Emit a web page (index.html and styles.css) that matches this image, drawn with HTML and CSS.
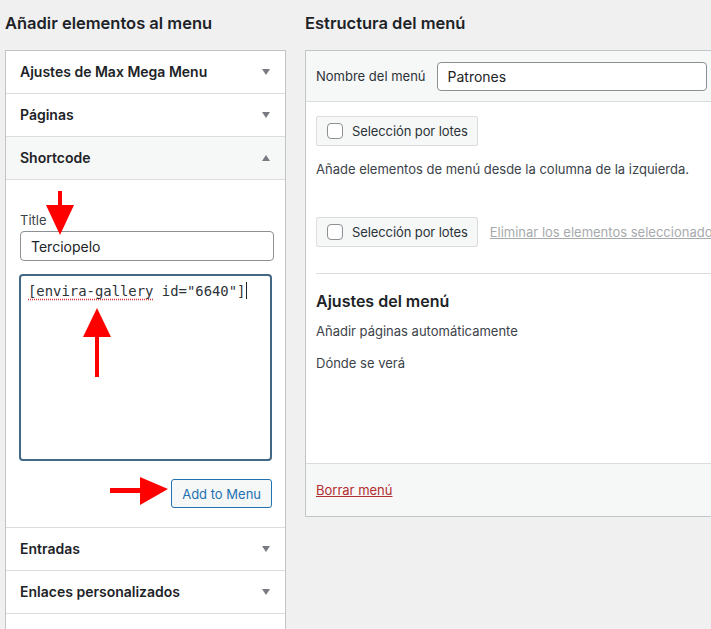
FILE: index.html
```html
<!DOCTYPE html>
<html>
<head>
    <title>Menús</title>
    <link rel="stylesheet" href="styles.css">
</head>
<body>
    <div class="menu-page">
        <div class="col-left">
            <h2>Añadir elementos al menu</h2>
            <div class="accordion">
                <div class="acc-row"><span>Ajustes de Max Mega Menu</span><i class="caret"></i></div>
                <div class="acc-row"><span>Páginas</span><i class="caret"></i></div>
                <div class="acc-row open"><span>Shortcode</span><i class="caret up"></i></div>
                <div class="acc-body">
                    <label class="field-label">Title</label>
                    <input class="text-input" type="text" value="Terciopelo">
                    <div class="code-area"><span class="typo">[envira-gallery</span> id="6640"]<span class="cursor"></span></div>
                    <div class="actions"><button class="btn-add">Add to Menu</button></div>

                    <svg class="arrow arrow-down" width="30" height="46" viewBox="0 0 30 46">
                        <rect x="13" y="0" width="4" height="20" fill="#f00"/>
                        <polygon points="1,14 29,14 15,44" fill="#f00"/>
                    </svg>
                    <svg class="arrow arrow-up" width="30" height="70" viewBox="0 0 30 70">
                        <polygon points="1,29 29,29 15,0" fill="#f00"/>
                        <rect x="13" y="25" width="4" height="44" fill="#f00"/>
                    </svg>
                    <svg class="arrow arrow-right" width="60" height="30" viewBox="0 0 60 30">
                        <rect x="0" y="12" width="34" height="5" fill="#f00"/>
                        <polygon points="30,1 30,29 58,13" fill="#f00"/>
                    </svg>
                </div>
                <div class="acc-row"><span>Entradas</span><i class="caret"></i></div>
                <div class="acc-row"><span>Enlaces personalizados</span><i class="caret"></i></div>
                <div class="acc-row"><span></span></div>
            </div>
        </div>

        <div class="col-right">
            <h2>Estructura del menú</h2>
            <div class="structure">
                <div class="structure-head">
                    <label>Nombre del menú</label>
                    <input class="text-input name-input" type="text" value="Patrones">
                </div>
                <div class="structure-body">
                    <div class="bulk"><span class="check"></span>Selección por lotes</div>
                    <p class="hint">Añade elementos de menú desde la columna de la izquierda.</p>
                    <div class="bulk-line">
                        <div class="bulk"><span class="check"></span>Selección por lotes</div>
                        <a class="remove-link">Eliminar los elementos seleccionados</a>
                    </div>
                    <div class="settings">
                        <h3>Ajustes del menú</h3>
                        <p>Añadir páginas automáticamente</p>
                        <p>Dónde se verá</p>
                    </div>
                </div>
                <div class="structure-foot">
                    <a class="delete-link">Borrar menú</a>
                </div>
            </div>
        </div>
    </div>
</body>
</html>
```

FILE: styles.css
```css
html, body { overflow: hidden; }
body { margin: 0; background: #f0f0f1; font-family: Inter, "Noto Sans", sans-serif; color: #1d2327; }
.menu-page { display: flex; gap: 19px; padding-left: 5px; }
h2 { font-size: 16.5px; font-weight: 600; line-height: 24px; margin: 11px 0 15px; }

.col-left { width: 281px; flex-shrink: 0; }
.accordion { background: #fff; border: 1px solid #c3c4c7; border-bottom: none; }
.acc-row { border-bottom: 1px solid #dcdcde; display: flex; align-items: center; justify-content: space-between; padding: 0 15px 1px 14px; box-sizing: border-box; height: 43px; font-size: 14px; font-weight: 600; }
.acc-row.open { background: #f6f7f7; }
.caret { width: 0; height: 0; border-left: 4.5px solid transparent; border-right: 4.5px solid transparent; border-top: 6px solid #787c82; }
.caret.up { border-top: none; border-bottom: 6px solid #787c82; }
.acc-body { position: relative; height: 348px; box-sizing: border-box; border-bottom: 1px solid #dcdcde; padding: 31px 13px 0 13px; }
.field-label { display: block; font-size: 13px; line-height: 18px; color: #3c434a; margin-bottom: 2px; padding-left: 1px; }
.text-input { box-sizing: border-box; width: 254px; height: 30px; margin-left: 1px; border: 1px solid #8c8f94; border-radius: 4px; padding: 0 10px; font: 14px Inter, sans-serif; color: #1d2327; background: #fff; }
.code-area { box-sizing: border-box; height: 187px; margin-top: 13px; border: 2px solid #426886; border-radius: 4px; padding: 5px 7px; font: 13.9px/20px "DejaVu Sans Mono", monospace; color: #2c3338; }
.typo { text-decoration: underline dotted #d63638; text-underline-offset: 3px; }
.cursor { display: inline-block; width: 1px; height: 17px; background: #1d2327; vertical-align: -3px; margin-left: 1px; }
.actions { display: flex; justify-content: flex-end; margin-top: 18px; }
.btn-add { height: 29px; padding: 0 10px; border: 1px solid #2271b1; border-radius: 3px; background: #f6f7f7; color: #2271b1; font: 13px Inter, sans-serif; }
.arrow { position: absolute; }
.arrow-down { left: 39px; top: 11px; }
.arrow-up { left: 76px; top: 128px; }
.arrow-right { left: 104px; top: 296px; }

.col-right { width: 430px; flex-shrink: 0; }
.structure { background: #fff; border: 1px solid #c3c4c7; font-size: 13px; }
.structure-head { height: 50px; background: #f6f7f7; border-bottom: 1px solid #dcdcde; display: flex; align-items: center; padding: 0 10px; gap: 10px; color: #2c3338; }
.name-input { width: 270px; height: 29px; }
.structure-body { padding: 14px 10px 0; height: 362px; box-sizing: border-box; border-bottom: 1px solid #dcdcde; }
.bulk { display: inline-flex; align-items: center; flex-shrink: 0; white-space: nowrap; box-sizing: border-box; height: 30px; padding: 0 9px 0 10px; background: #f6f7f7; border: 1px solid #dcdcde; border-radius: 2px; color: #2c3338; letter-spacing: -0.1px; }
.check { width: 14px; height: 14px; border: 1px solid #8c8f94; border-radius: 4px; background: #fff; margin-right: 9px; }
.hint { margin: 14px 0 0; line-height: 18px; color: #3c434a; }
.bulk-line { display: flex; align-items: center; gap: 12px; margin-top: 39px; }
.remove-link { color: #a7aaad; text-decoration: underline; white-space: nowrap; }
.settings { margin-top: 26px; border-top: 1px solid #dcdcde; padding-top: 15px; }
.settings h3 { margin: 0; font-size: 16px; font-weight: 600; line-height: 24px; }
.settings p { margin: 9px 0 0; line-height: 18px; color: #3c434a; }
.settings p + p { margin-top: 14px; }
.structure-foot { height: 52px; background: #f6f7f7; display: flex; align-items: center; padding: 0 10px; }
.delete-link { color: #b32d2e; text-decoration: underline; }
```
